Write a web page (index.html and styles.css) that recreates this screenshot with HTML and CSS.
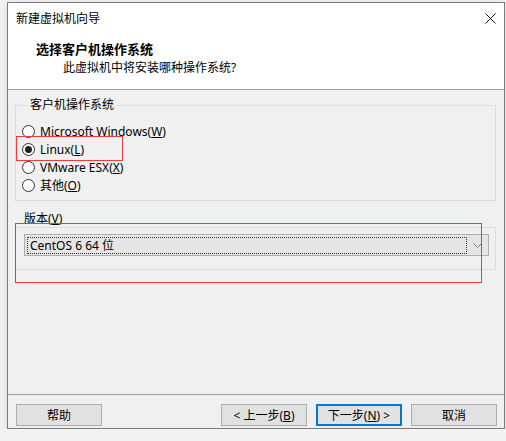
FILE: index.html
```html
<!DOCTYPE html>
<html lang="zh-CN">
<head>
    <meta charset="UTF-8">
    <title>新建虚拟机向导</title>
    <link rel="stylesheet" href="styles.css">
</head>
<body>
    <div class="window">
        <div class="titlebar">
            <span class="title">新建虚拟机向导</span>
            <svg class="close" width="11" height="11" viewBox="0 0 11 11">
                <path d="M0.5 0.5 L10.5 10.5 M10.5 0.5 L0.5 10.5" stroke="#111" stroke-width="1" fill="none"/>
            </svg>
        </div>

        <div class="header">
            <h1>选择客户机操作系统</h1>
            <p>此虚拟机中将安装哪种操作系统?</p>
        </div>

        <div class="content">
            <fieldset class="group os-group">
                <legend>客户机操作系统</legend>
                <label class="radio"><span class="dot"></span><span>Microsoft Windows(<u>W</u>)</span></label>
                <label class="radio checked"><span class="dot"></span><span>Linux(<u>L</u>)</span></label>
                <label class="radio"><span class="dot"></span><span>VMware ESX(<u>X</u>)</span></label>
                <label class="radio"><span class="dot"></span><span>其他(<u>O</u>)</span></label>
            </fieldset>

            <div class="version-label">版本(<u>V</u>)</div>
            <div class="group version-group">
                <div class="select">
                    <span class="select-value">CentOS 6 64 位</span>
                    <svg class="chevron" width="9" height="5" viewBox="0 0 9 5">
                        <path d="M0.5 0.5 L4.5 4.5 L8.5 0.5" stroke="#777" stroke-width="1" fill="none"/>
                    </svg>
                </div>
            </div>

            <span class="mark mark-linux"></span>
            <span class="mark mark-version"></span>
        </div>

        <div class="footer">
            <button class="btn">帮助</button>
            <div class="nav-buttons">
                <button class="btn">&lt; 上一步(<u>B</u>)</button>
                <button class="btn default">下一步(<u>N</u>) &gt;</button>
                <button class="btn">取消</button>
            </div>
        </div>
    </div>
</body>
</html>
```

FILE: styles.css
```css
* {
    margin: 0;
    padding: 0;
    box-sizing: border-box;
}
body {
    font-family: "Noto Sans", "Noto Sans CJK SC", sans-serif;
    font-size: 12px;
    color: #000;
    background-color: #f3f3f3;
    padding: 2px 0 0 7px;
}
u {
    text-decoration: underline;
    text-underline-offset: 1px;
}

.window {
    width: 498px;
    height: 427px;
    border: 1px solid #7a7a7a;
    background-color: #f0f0f0;
    display: flex;
    flex-direction: column;
    box-shadow: 0 3px 10px rgba(0, 0, 0, 0.12);
}

/* title bar */
.titlebar {
    height: 30px;
    background-color: #fff;
    display: flex;
    align-items: center;
    justify-content: space-between;
    padding: 0 8px 0 8px;
}
.title {
    line-height: 16px;
    padding-top: 1px;
}
.close {
    display: block;
    margin-top: 1px;
}

/* header */
.header {
    background-color: #fff;
    border-bottom: 1px solid #a0a0a0;
    padding: 8px 0 13px 28px;
    height: 57px;
}
.header h1 {
    font-size: 13px;
    font-weight: bold;
    line-height: 16px;
}
.header p {
    line-height: 16px;
    margin-top: 3px;
    padding-left: 27px;
}

/* main content */
.content {
    flex: 1;
    position: relative;
    padding: 8px 8px 0 7px;
}
.group {
    border: 1px solid #dcdcdc;
}
.os-group {
    padding: 10px 6px 6px 6px;
}
.os-group legend {
    line-height: 14px;
    margin-left: 6px;
    padding: 0 2px;
}
.radio {
    display: flex;
    align-items: center;
    gap: 5px;
    height: 18px;
}
.dot {
    width: 13px;
    height: 13px;
    border: 1px solid #333;
    border-radius: 50%;
    background-color: #fff;
    display: flex;
    align-items: center;
    justify-content: center;
}
.radio.checked .dot::after {
    content: '';
    width: 7px;
    height: 7px;
    border-radius: 50%;
    background-color: #222;
}

.version-label {
    line-height: 14px;
    margin: 11px 0 1px 9px;
}
.version-group {
    padding: 6px 6px 13px 8px;
}
.select {
    height: 22px;
    border: 1px solid #adadad;
    background-color: #e5e5e5;
    display: flex;
    align-items: center;
    padding: 1px 6px 1px 2px;
    gap: 6px;
}
.select-value {
    flex: 1;
    height: 17px;
    line-height: 15px;
    border: 1px dotted #333;
    padding-left: 2px;
}
.chevron {
    display: block;
}

/* red annotation boxes */
.mark {
    position: absolute;
    border: 1px solid #f03a3a;
    pointer-events: none;
}
.mark-linux {
    left: 8px;
    top: 46px;
    width: 107px;
    height: 25px;
}
.mark-version {
    left: 7px;
    top: 133px;
    width: 467px;
    height: 60px;
}

/* footer */
.footer {
    border-top: 1px solid #a0a0a0;
    padding: 9px 7px 0 8px;
    height: 34px;
    display: flex;
    justify-content: space-between;
}
.nav-buttons {
    display: flex;
    gap: 9px;
}
.btn {
    width: 86px;
    height: 22px;
    font-family: inherit;
    font-size: 12px;
    color: #000;
    background-color: #e1e1e1;
    border: 1px solid #adadad;
}
.btn.default {
    border: 2px solid #0078d7;
}
```
